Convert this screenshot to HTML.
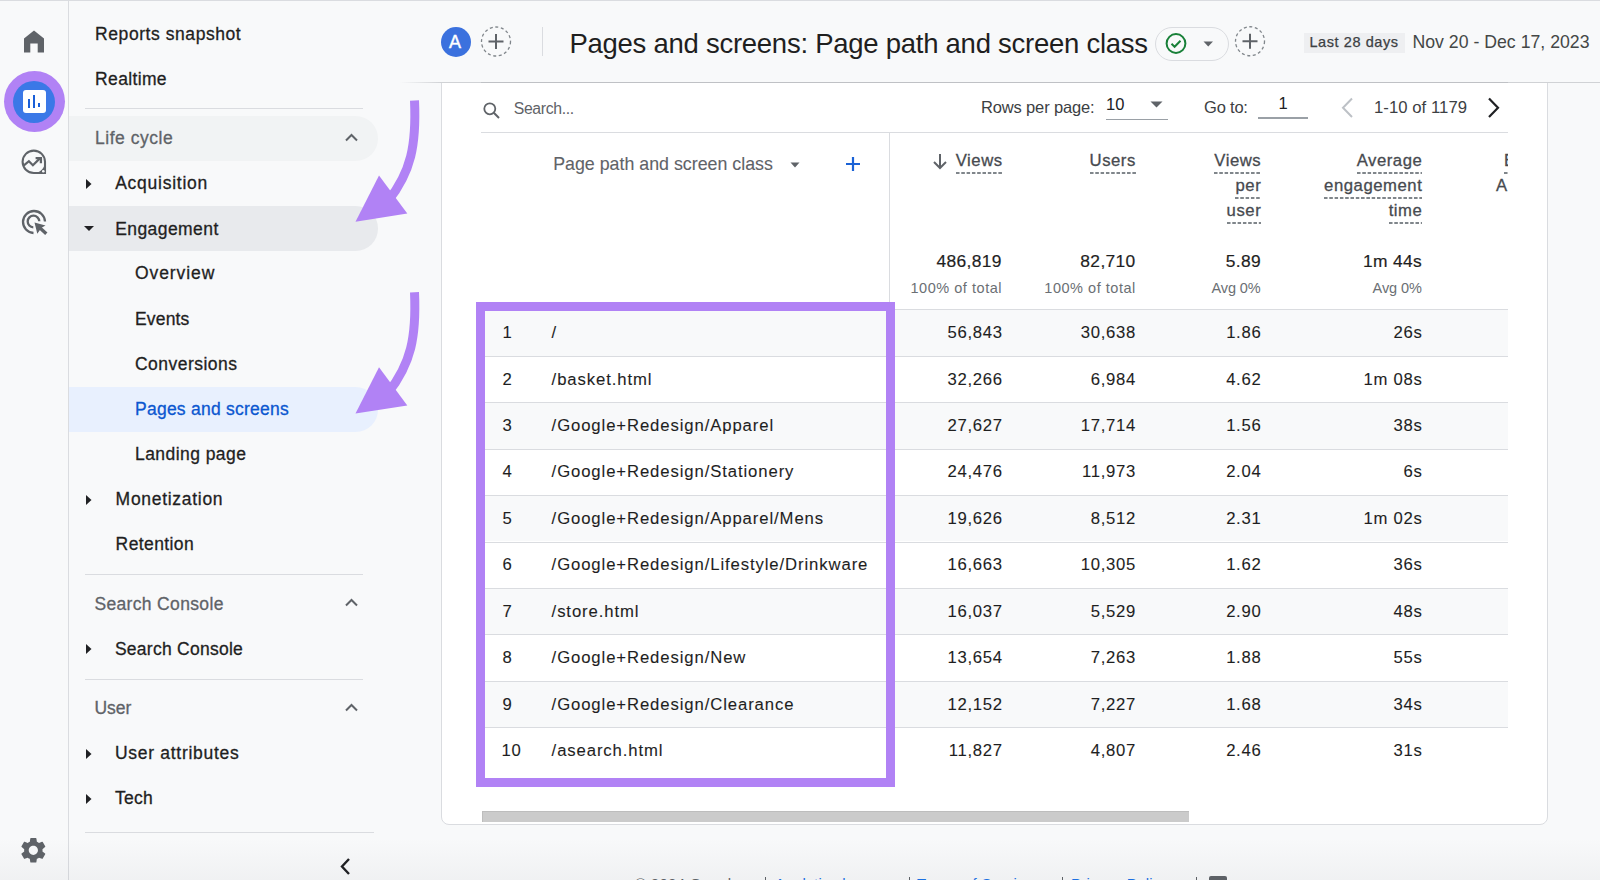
<!DOCTYPE html>
<html><head><meta charset="utf-8"><title>GA4 Pages and screens</title>
<style>
html,body{margin:0;padding:0}
body{width:1600px;height:880px;overflow:hidden;position:relative;background:#f8f9fa;font-family:"Liberation Sans",sans-serif}
.t{position:absolute;white-space:nowrap;line-height:normal}
.r{position:absolute}
.dash{background-image:linear-gradient(90deg,#80868b 66%,transparent 66%);background-size:5.3px 2px;background-repeat:repeat-x;background-position:0 100%;padding-bottom:4px;-webkit-text-stroke:inherit}
</style></head><body>
<div class="r" style="left:0px;top:0px;width:1600px;height:1px;background:#dadce0;"></div>
<div class="r" style="left:68px;top:0px;width:1px;height:880px;background:#dadce0;"></div>
<svg class="r" style="left:22px;top:29px" width="24" height="24" viewBox="0 0 24 24"><path d="M12 1.5 L22 9.5 V23.5 H15.7 V14.5 H8.3 V23.5 H2 V9.5 Z" fill="#5f6368"/></svg>
<div class="r" style="left:3.5px;top:71px;width:61px;height:61px;border-radius:50%;background:#b182f5"></div>
<div class="r" style="left:13px;top:80.5px;width:42px;height:42px;border-radius:50%;background:#3b78e7"></div>
<div class="r" style="left:22.5px;top:90px;width:23px;height:23px;border-radius:3px;background:#fff"></div>
<div class="r" style="left:27.8px;top:99px;width:2.2px;height:8.5px;background:#1a5fd8;"></div>
<div class="r" style="left:33.1px;top:95px;width:2px;height:12.5px;background:#1a5fd8;"></div>
<div class="r" style="left:38.1px;top:102.8px;width:2.2px;height:4.7px;background:#1a5fd8;"></div>
<svg class="r" style="left:18px;top:146px" width="32" height="32" viewBox="0 0 32 32"><path d="M15.8 4.6 A11.2 11.2 0 1 0 15.8 27 H27 V15.8 A11.2 11.2 0 0 0 15.8 4.6 Z" fill="none" stroke="#5f6368" stroke-width="2.1"/><path d="M27 15.8 V27 H15.8 A11.2 11.2 0 0 0 27 15.8 Z" fill="#5f6368"/><circle cx="25.3" cy="25.2" r="1.3" fill="#f8f9fa"/><path d="M5.6 19.6 L10.9 15.2 L14.9 19.2 L21.6 12.6" fill="none" stroke="#5f6368" stroke-width="2.2"/><path d="M17.6 12.1 H22.9 V17.2" fill="none" stroke="#5f6368" stroke-width="2.3"/></svg>
<svg class="r" style="left:21px;top:209px" width="27" height="27" viewBox="0 0 27 27"><path d="M24 12.5 A11 11 0 1 0 12.5 24" fill="none" stroke="#5f6368" stroke-width="2.3"/><path d="M18.3 12.3 A5.8 5.8 0 1 0 12.3 18.3" fill="none" stroke="#5f6368" stroke-width="2.3"/><path d="M13.5 13.5 L24.5 16.6 L20.5 18.8 L16.3 24.8 Z" fill="#5f6368"/><path d="M19 19 L25.3 24.8" stroke="#5f6368" stroke-width="3.3"/></svg>
<svg class="r" style="left:18.4px;top:835.4px" width="30.7" height="30.7" viewBox="0 0 24 24"><path fill="#5f6368" d="M19.14 12.94c.04-.3.06-.61.06-.94 0-.32-.02-.64-.07-.94l2.03-1.58a.49.49 0 0 0 .12-.61l-1.92-3.32a.488.488 0 0 0-.59-.22l-2.39.96c-.5-.38-1.03-.7-1.62-.94l-.36-2.54a.484.484 0 0 0-.48-.41h-3.84c-.24 0-.43.17-.47.41l-.36 2.54c-.59.24-1.13.57-1.62.94l-2.39-.96c-.22-.08-.47 0-.59.22L2.74 8.87c-.12.21-.08.47.12.61l2.03 1.58c-.05.3-.09.63-.09.94s.02.64.07.94l-2.03 1.58a.49.49 0 0 0-.12.61l1.92 3.32c.12.22.37.29.59.22l2.39-.96c.5.38 1.03.7 1.62.94l.36 2.54c.05.24.24.41.48.41h3.84c.24 0 .44-.17.47-.41l.36-2.54c.59-.24 1.13-.56 1.62-.94l2.39.96c.22.08.47 0 .59-.22l1.92-3.32c.12-.22.07-.47-.12-.61l-2.01-1.58zM12 15.6c-1.98 0-3.6-1.62-3.6-3.6s1.62-3.6 3.6-3.6 3.6 1.62 3.6 3.6-1.62 3.6-3.6 3.6z"/></svg>
<div class="t" style="left:95.10px;top:23.96px;font-size:17.5px;color:#1f1f1f;letter-spacing:0.562px;font-weight:400;-webkit-text-stroke:0.3px currentColor;">Reports snapshot</div>
<div class="t" style="left:95.10px;top:68.86px;font-size:17.5px;color:#1f1f1f;letter-spacing:0.349px;font-weight:400;-webkit-text-stroke:0.3px currentColor;">Realtime</div>
<div class="r" style="left:85px;top:108px;width:278px;height:1px;background:#dadce0;"></div>
<div class="r" style="left:69px;top:116px;width:309px;height:44.6px;background:#f1f3f4;border-radius:0 22.3px 22.3px 0"></div>
<div class="t" style="left:95.00px;top:128.26px;font-size:17.5px;color:#5f6368;letter-spacing:0.518px;font-weight:400;-webkit-text-stroke:0.3px currentColor;">Life cycle</div>
<svg class="r" style="left:344px;top:132px" width="15" height="11" viewBox="0 0 15 11"><path d="M2 8.5 L7.5 3 L13 8.5" fill="none" stroke="#5f6368" stroke-width="2"/></svg>
<svg class="r" style="left:85.5px;top:179px" width="6" height="10" viewBox="0 0 6 10"><path d="M0 0 L5.5 5 L0 10 Z" fill="#202124"/></svg>
<div class="t" style="left:115.20px;top:173.46px;font-size:17.5px;color:#1f1f1f;letter-spacing:0.747px;font-weight:400;-webkit-text-stroke:0.3px currentColor;">Acquisition</div>
<div class="r" style="left:69px;top:206.2px;width:309px;height:44.7px;background:#e8eaed;border-radius:0 22.3px 22.3px 0"></div>
<svg class="r" style="left:83.5px;top:226px" width="10" height="6" viewBox="0 0 10 6"><path d="M0 0 L10 0 L5 5 Z" fill="#202124"/></svg>
<div class="t" style="left:115.20px;top:218.56px;font-size:17.5px;color:#1f1f1f;letter-spacing:0.429px;font-weight:400;-webkit-text-stroke:0.3px currentColor;">Engagement</div>
<div class="t" style="left:135.00px;top:263.36px;font-size:17.5px;color:#1f1f1f;letter-spacing:0.918px;font-weight:400;-webkit-text-stroke:0.3px currentColor;">Overview</div>
<div class="t" style="left:135.00px;top:308.66px;font-size:17.5px;color:#1f1f1f;letter-spacing:0.16px;font-weight:400;-webkit-text-stroke:0.3px currentColor;">Events</div>
<div class="t" style="left:135.00px;top:353.66px;font-size:17.5px;color:#1f1f1f;letter-spacing:0.473px;font-weight:400;-webkit-text-stroke:0.3px currentColor;">Conversions</div>
<div class="r" style="left:69px;top:387px;width:309px;height:44.75px;background:#e8f0fe;border-radius:0 22.3px 22.3px 0"></div>
<div class="t" style="left:135.00px;top:398.96px;font-size:17.5px;color:#0b57d0;letter-spacing:0.246px;font-weight:400;-webkit-text-stroke:0.3px currentColor;">Pages and screens</div>
<div class="t" style="left:135.00px;top:444.06px;font-size:17.5px;color:#1f1f1f;letter-spacing:0.438px;font-weight:400;-webkit-text-stroke:0.3px currentColor;">Landing page</div>
<svg class="r" style="left:86px;top:494.5px" width="6" height="10" viewBox="0 0 6 10"><path d="M0 0 L5.5 5 L0 10 Z" fill="#202124"/></svg>
<div class="t" style="left:115.60px;top:489.06px;font-size:17.5px;color:#1f1f1f;letter-spacing:0.707px;font-weight:400;-webkit-text-stroke:0.3px currentColor;">Monetization</div>
<div class="t" style="left:115.60px;top:534.06px;font-size:17.5px;color:#1f1f1f;letter-spacing:0.398px;font-weight:400;-webkit-text-stroke:0.3px currentColor;">Retention</div>
<div class="r" style="left:85px;top:573.5px;width:278px;height:1px;background:#dadce0;"></div>
<div class="t" style="left:94.40px;top:593.96px;font-size:17.5px;color:#5f6368;letter-spacing:0.345px;font-weight:400;-webkit-text-stroke:0.3px currentColor;">Search Console</div>
<svg class="r" style="left:344px;top:597px" width="15" height="11" viewBox="0 0 15 11"><path d="M2 8.5 L7.5 3 L13 8.5" fill="none" stroke="#5f6368" stroke-width="2"/></svg>
<svg class="r" style="left:86px;top:644px" width="6" height="10" viewBox="0 0 6 10"><path d="M0 0 L5.5 5 L0 10 Z" fill="#202124"/></svg>
<div class="t" style="left:114.90px;top:638.56px;font-size:17.5px;color:#1f1f1f;letter-spacing:0.261px;font-weight:400;-webkit-text-stroke:0.3px currentColor;">Search Console</div>
<div class="r" style="left:85px;top:678.5px;width:278px;height:1px;background:#dadce0;"></div>
<div class="t" style="left:94.40px;top:697.86px;font-size:17.5px;color:#5f6368;letter-spacing:-0.014px;font-weight:400;-webkit-text-stroke:0.3px currentColor;">User</div>
<svg class="r" style="left:344px;top:702px" width="15" height="11" viewBox="0 0 15 11"><path d="M2 8.5 L7.5 3 L13 8.5" fill="none" stroke="#5f6368" stroke-width="2"/></svg>
<svg class="r" style="left:86px;top:748.5px" width="6" height="10" viewBox="0 0 6 10"><path d="M0 0 L5.5 5 L0 10 Z" fill="#202124"/></svg>
<div class="t" style="left:115.00px;top:743.26px;font-size:17.5px;color:#1f1f1f;letter-spacing:0.708px;font-weight:400;-webkit-text-stroke:0.3px currentColor;">User attributes</div>
<svg class="r" style="left:86px;top:793.5px" width="6" height="10" viewBox="0 0 6 10"><path d="M0 0 L5.5 5 L0 10 Z" fill="#202124"/></svg>
<div class="t" style="left:115.00px;top:788.26px;font-size:17.5px;color:#1f1f1f;letter-spacing:0.247px;font-weight:400;-webkit-text-stroke:0.3px currentColor;">Tech</div>
<div class="r" style="left:85px;top:832px;width:289px;height:1px;background:#dadce0;"></div>
<svg class="r" style="left:337px;top:856px" width="16" height="21" viewBox="0 0 16 21"><path d="M12 3 L5 10.5 L12 18" fill="none" stroke="#202124" stroke-width="2.4"/></svg>
<div class="r" style="left:441px;top:60px;width:1105px;height:762.5px;background:#fff;border:1px solid #dadce0;border-radius:8px"></div>
<div class="r" style="left:400px;top:1px;width:1200px;height:81px;background:#f8f9fa;"></div>
<div class="r" style="left:400px;top:82px;width:1200px;height:1px;background:linear-gradient(90deg,rgba(200,202,206,0),#d0d2d5 41px,#d0d2d5)"></div>
<div class="r" style="left:481px;top:82px;width:1027px;height:1px;background:#bfc1c5;"></div>
<div class="r" style="left:441px;top:26.5px;width:30px;height:30px;border-radius:50%;background:#3b71de"></div>
<div class="t" style="left:449.00px;top:32.21px;font-size:18px;color:#fff;letter-spacing:0px;font-weight:400;-webkit-text-stroke:0.4px #fff;">A</div>
<svg class="r" style="left:480px;top:26px" width="32" height="32" viewBox="0 0 32 32"><circle cx="16" cy="15.5" r="14.5" fill="none" stroke="#80868b" stroke-width="1.3" stroke-dasharray="3 2.6"/><path d="M8.5 15.5 H23.5 M16 8 V23" stroke="#5f6368" stroke-width="2"/></svg>
<div class="r" style="left:541.5px;top:26.5px;width:1px;height:29px;background:#dadce0;"></div>
<div class="t" style="left:569.40px;top:28.01px;font-size:27.5px;color:#1f1f1f;letter-spacing:-0.261px;font-weight:400;">Pages and screens: Page path and screen class</div>
<div class="r" style="left:1155px;top:26.5px;width:74px;height:34px;box-sizing:border-box;border:1px solid #dadce0;border-radius:17px"></div>
<svg class="r" style="left:1165px;top:33px" width="22" height="22" viewBox="0 0 22 22"><circle cx="11" cy="10.5" r="9.4" fill="none" stroke="#188038" stroke-width="2"/><path d="M6.5 10.8 L9.6 13.8 L15.5 7.8" fill="none" stroke="#188038" stroke-width="2"/></svg>
<svg class="r" style="left:1203px;top:41px" width="11" height="6" viewBox="0 0 11 6"><path d="M0.5 0.5 H10 L5.25 5.5 Z" fill="#5f6368"/></svg>
<svg class="r" style="left:1234px;top:25px" width="32" height="32" viewBox="0 0 32 32"><circle cx="16" cy="16.25" r="14.5" fill="none" stroke="#80868b" stroke-width="1.3" stroke-dasharray="3 2.6"/><path d="M8.5 16.25 H23.5 M16 8.75 V23.75" stroke="#5f6368" stroke-width="2"/></svg>
<div class="r" style="left:1304px;top:32.6px;width:100.7px;height:20px;background:#eeeff1"></div>
<div class="t" style="left:1309.40px;top:33.98px;font-size:14.5px;color:#3c4043;letter-spacing:0.59px;font-weight:400;-webkit-text-stroke:0.25px currentColor;">Last 28 days</div>
<div class="t" style="left:1412.50px;top:32.08px;font-size:17.7px;color:#444746;letter-spacing:0px;font-weight:400;">Nov 20 - Dec 17, 2023</div>
<svg class="r" style="left:482px;top:101px" width="19" height="19" viewBox="0 0 19 19"><circle cx="7.8" cy="7.8" r="5.5" fill="none" stroke="#5f6368" stroke-width="1.8"/><path d="M11.8 11.8 L17 17" stroke="#5f6368" stroke-width="2"/></svg>
<div class="t" style="left:513.70px;top:99.60px;font-size:15.8px;color:#5f6368;letter-spacing:-0.341px;font-weight:400;">Search...</div>
<div class="t" style="left:981.00px;top:98.07px;font-size:16.5px;color:#3c4043;letter-spacing:-0.15px;font-weight:400;">Rows per page:</div>
<div class="t" style="left:1106.00px;top:95.27px;font-size:16.5px;color:#202124;letter-spacing:0px;font-weight:400;">10</div>
<svg class="r" style="left:1150px;top:101px" width="13" height="7" viewBox="0 0 13 7"><path d="M0.5 0.5 H12.5 L6.5 6.5 Z" fill="#5f6368"/></svg>
<div class="r" style="left:1105.5px;top:118.5px;width:62.5px;height:1.5px;background:#9aa0a6;"></div>
<div class="t" style="left:1204.00px;top:98.07px;font-size:16.5px;color:#3c4043;letter-spacing:-0.2px;font-weight:400;">Go to:</div>
<div class="t" style="left:1278.50px;top:93.67px;font-size:16.5px;color:#202124;letter-spacing:0px;font-weight:400;">1</div>
<div class="r" style="left:1258px;top:117px;width:50px;height:1.5px;background:#9aa0a6;"></div>
<svg class="r" style="left:1340px;top:97px" width="15" height="22" viewBox="0 0 15 22"><path d="M12 1.5 L3 10.8 L12 20" fill="none" stroke="#bdc1c6" stroke-width="2"/></svg>
<div class="t" style="left:1374.00px;top:97.64px;font-size:16.7px;color:#3c4043;letter-spacing:0.05px;font-weight:400;">1-10 of 1179</div>
<svg class="r" style="left:1486px;top:97px" width="15" height="22" viewBox="0 0 15 22"><path d="M3 1.5 L12 10.8 L3 20" fill="none" stroke="#202124" stroke-width="2.2"/></svg>
<div class="r" style="left:481px;top:132px;width:1027px;height:1px;background:#dadce0;"></div>
<div class="t" style="left:553.20px;top:153.59px;font-size:17.8px;color:#5f6368;letter-spacing:0.009px;font-weight:400;-webkit-text-stroke:0.1px currentColor;">Page path and screen class</div>
<svg class="r" style="left:790px;top:161.5px" width="10" height="6" viewBox="0 0 10 6"><path d="M0.5 0.5 H9.5 L5 5.5 Z" fill="#5f6368"/></svg>
<svg class="r" style="left:845px;top:155.5px" width="16" height="16" viewBox="0 0 16 16"><path d="M1 8 H15 M8 1 V15" stroke="#1a62d6" stroke-width="2.2"/></svg>
<div class="r" style="left:889px;top:133px;width:1px;height:176.5px;background:#dadce0;"></div>
<svg class="r" style="left:932px;top:153px" width="16" height="17" viewBox="0 0 16 17"><path d="M8 1 V15 M2 9 L8 15 L14 9" fill="none" stroke="#5f6368" stroke-width="2"/></svg>
<div class="t" style="right:597.34px;text-align:right;top:150.89px;font-size:16.7px;color:#474a4f;letter-spacing:0.55px;font-weight:400;-webkit-text-stroke:0.3px currentColor;"><span class="dash">Views</span></div>
<div class="t" style="right:464.14px;text-align:right;top:150.89px;font-size:16.7px;color:#474a4f;letter-spacing:0.55px;font-weight:400;-webkit-text-stroke:0.3px currentColor;"><span class="dash">Users</span></div>
<div class="t" style="right:338.74px;text-align:right;top:150.89px;font-size:16.7px;color:#474a4f;letter-spacing:0.55px;font-weight:400;-webkit-text-stroke:0.3px currentColor;"><span class="dash">Views</span></div>
<div class="t" style="right:338.74px;text-align:right;top:175.89px;font-size:16.7px;color:#474a4f;letter-spacing:0.55px;font-weight:400;-webkit-text-stroke:0.3px currentColor;"><span class="dash">per</span></div>
<div class="t" style="right:338.74px;text-align:right;top:200.89px;font-size:16.7px;color:#474a4f;letter-spacing:0.55px;font-weight:400;-webkit-text-stroke:0.3px currentColor;"><span class="dash">user</span></div>
<div class="t" style="right:177.66px;text-align:right;top:150.89px;font-size:16.7px;color:#474a4f;letter-spacing:0.55px;font-weight:400;-webkit-text-stroke:0.3px currentColor;"><span class="dash">Average</span></div>
<div class="t" style="right:177.65px;text-align:right;top:175.89px;font-size:16.7px;color:#474a4f;letter-spacing:0.55px;font-weight:400;-webkit-text-stroke:0.3px currentColor;"><span class="dash">engagement</span></div>
<div class="t" style="right:177.65px;text-align:right;top:200.89px;font-size:16.7px;color:#474a4f;letter-spacing:0.55px;font-weight:400;-webkit-text-stroke:0.3px currentColor;"><span class="dash">time</span></div>
<div class="r" style="left:1490px;top:140px;width:18px;height:60px;overflow:hidden">
<div class="t" style="left:14px;top:10.89px;font-size:16.7px;color:#474a4f;-webkit-text-stroke:0.3px currentColor;"><span class="dash">E</span></div>
<div class="t" style="left:6px;top:35.89px;font-size:16.7px;color:#474a4f;-webkit-text-stroke:0.3px currentColor;">A</div>
</div>
<div class="t" style="right:598.15px;text-align:right;top:251.25px;font-size:17.4px;color:#1f1f1f;letter-spacing:0.35px;font-weight:400;-webkit-text-stroke:0.2px currentColor;">486,819</div>
<div class="t" style="right:597.96px;text-align:right;top:280.13px;font-size:14.5px;color:#6b6f74;letter-spacing:0.53px;font-weight:400;">100% of total</div>
<div class="t" style="right:464.36px;text-align:right;top:251.25px;font-size:17.4px;color:#1f1f1f;letter-spacing:0.35px;font-weight:400;-webkit-text-stroke:0.2px currentColor;">82,710</div>
<div class="t" style="right:464.16px;text-align:right;top:280.13px;font-size:14.5px;color:#6b6f74;letter-spacing:0.53px;font-weight:400;">100% of total</div>
<div class="t" style="right:338.94px;text-align:right;top:251.25px;font-size:17.4px;color:#1f1f1f;letter-spacing:0.35px;font-weight:400;-webkit-text-stroke:0.2px currentColor;">5.89</div>
<div class="t" style="right:339.40px;text-align:right;top:280.13px;font-size:14.5px;color:#6b6f74;letter-spacing:-0.101px;font-weight:400;">Avg 0%</div>
<div class="t" style="right:177.84px;text-align:right;top:251.25px;font-size:17.4px;color:#1f1f1f;letter-spacing:0.35px;font-weight:400;-webkit-text-stroke:0.2px currentColor;">1m 44s</div>
<div class="t" style="right:178.30px;text-align:right;top:280.13px;font-size:14.5px;color:#6b6f74;letter-spacing:-0.101px;font-weight:400;">Avg 0%</div>
<div class="r" style="left:481px;top:309.3px;width:1027px;height:46.44px;background:#f8f9fa;"></div>
<div class="r" style="left:481px;top:309.3px;width:1027px;height:1px;background:#dadce0;"></div>
<div class="t" style="left:502.40px;top:323.09px;font-size:16.7px;color:#1f1f1f;letter-spacing:0.7px;font-weight:400;-webkit-text-stroke:0.1px currentColor;">1</div>
<div class="t" style="left:551.60px;top:323.09px;font-size:16.7px;color:#1f1f1f;letter-spacing:0.9px;font-weight:400;-webkit-text-stroke:0.1px currentColor;">/</div>
<div class="t" style="right:597.21px;text-align:right;top:323.09px;font-size:16.7px;color:#1f1f1f;letter-spacing:0.7px;font-weight:400;-webkit-text-stroke:0.1px currentColor;">56,843</div>
<div class="t" style="right:464.01px;text-align:right;top:323.09px;font-size:16.7px;color:#1f1f1f;letter-spacing:0.7px;font-weight:400;-webkit-text-stroke:0.1px currentColor;">30,638</div>
<div class="t" style="right:338.60px;text-align:right;top:323.09px;font-size:16.7px;color:#1f1f1f;letter-spacing:0.7px;font-weight:400;-webkit-text-stroke:0.1px currentColor;">1.86</div>
<div class="t" style="right:177.49px;text-align:right;top:323.09px;font-size:16.7px;color:#1f1f1f;letter-spacing:0.7px;font-weight:400;-webkit-text-stroke:0.1px currentColor;">26s</div>
<div class="r" style="left:481px;top:355.74px;width:1027px;height:1px;background:#dadce0;"></div>
<div class="t" style="left:502.40px;top:369.53px;font-size:16.7px;color:#1f1f1f;letter-spacing:0.7px;font-weight:400;-webkit-text-stroke:0.1px currentColor;">2</div>
<div class="t" style="left:551.60px;top:369.53px;font-size:16.7px;color:#1f1f1f;letter-spacing:0.9px;font-weight:400;-webkit-text-stroke:0.1px currentColor;">/basket.html</div>
<div class="t" style="right:597.21px;text-align:right;top:369.53px;font-size:16.7px;color:#1f1f1f;letter-spacing:0.7px;font-weight:400;-webkit-text-stroke:0.1px currentColor;">32,266</div>
<div class="t" style="right:463.99px;text-align:right;top:369.53px;font-size:16.7px;color:#1f1f1f;letter-spacing:0.7px;font-weight:400;-webkit-text-stroke:0.1px currentColor;">6,984</div>
<div class="t" style="right:338.60px;text-align:right;top:369.53px;font-size:16.7px;color:#1f1f1f;letter-spacing:0.7px;font-weight:400;-webkit-text-stroke:0.1px currentColor;">4.62</div>
<div class="t" style="right:177.49px;text-align:right;top:369.53px;font-size:16.7px;color:#1f1f1f;letter-spacing:0.7px;font-weight:400;-webkit-text-stroke:0.1px currentColor;">1m 08s</div>
<div class="r" style="left:481px;top:402.18px;width:1027px;height:46.44px;background:#f8f9fa;"></div>
<div class="r" style="left:481px;top:402.18px;width:1027px;height:1px;background:#dadce0;"></div>
<div class="t" style="left:502.40px;top:415.97px;font-size:16.7px;color:#1f1f1f;letter-spacing:0.7px;font-weight:400;-webkit-text-stroke:0.1px currentColor;">3</div>
<div class="t" style="left:551.60px;top:415.97px;font-size:16.7px;color:#1f1f1f;letter-spacing:0.9px;font-weight:400;-webkit-text-stroke:0.1px currentColor;">/Google+Redesign/Apparel</div>
<div class="t" style="right:597.21px;text-align:right;top:415.97px;font-size:16.7px;color:#1f1f1f;letter-spacing:0.7px;font-weight:400;-webkit-text-stroke:0.1px currentColor;">27,627</div>
<div class="t" style="right:464.01px;text-align:right;top:415.97px;font-size:16.7px;color:#1f1f1f;letter-spacing:0.7px;font-weight:400;-webkit-text-stroke:0.1px currentColor;">17,714</div>
<div class="t" style="right:338.60px;text-align:right;top:415.97px;font-size:16.7px;color:#1f1f1f;letter-spacing:0.7px;font-weight:400;-webkit-text-stroke:0.1px currentColor;">1.56</div>
<div class="t" style="right:177.49px;text-align:right;top:415.97px;font-size:16.7px;color:#1f1f1f;letter-spacing:0.7px;font-weight:400;-webkit-text-stroke:0.1px currentColor;">38s</div>
<div class="r" style="left:481px;top:448.62px;width:1027px;height:1px;background:#dadce0;"></div>
<div class="t" style="left:502.40px;top:462.41px;font-size:16.7px;color:#1f1f1f;letter-spacing:0.7px;font-weight:400;-webkit-text-stroke:0.1px currentColor;">4</div>
<div class="t" style="left:551.60px;top:462.41px;font-size:16.7px;color:#1f1f1f;letter-spacing:0.9px;font-weight:400;-webkit-text-stroke:0.1px currentColor;">/Google+Redesign/Stationery</div>
<div class="t" style="right:597.21px;text-align:right;top:462.41px;font-size:16.7px;color:#1f1f1f;letter-spacing:0.7px;font-weight:400;-webkit-text-stroke:0.1px currentColor;">24,476</div>
<div class="t" style="right:463.99px;text-align:right;top:462.41px;font-size:16.7px;color:#1f1f1f;letter-spacing:0.7px;font-weight:400;-webkit-text-stroke:0.1px currentColor;">11,973</div>
<div class="t" style="right:338.60px;text-align:right;top:462.41px;font-size:16.7px;color:#1f1f1f;letter-spacing:0.7px;font-weight:400;-webkit-text-stroke:0.1px currentColor;">2.04</div>
<div class="t" style="right:177.50px;text-align:right;top:462.41px;font-size:16.7px;color:#1f1f1f;letter-spacing:0.7px;font-weight:400;-webkit-text-stroke:0.1px currentColor;">6s</div>
<div class="r" style="left:481px;top:495.06px;width:1027px;height:46.44px;background:#f8f9fa;"></div>
<div class="r" style="left:481px;top:495.06px;width:1027px;height:1px;background:#dadce0;"></div>
<div class="t" style="left:502.40px;top:508.85px;font-size:16.7px;color:#1f1f1f;letter-spacing:0.7px;font-weight:400;-webkit-text-stroke:0.1px currentColor;">5</div>
<div class="t" style="left:551.60px;top:508.85px;font-size:16.7px;color:#1f1f1f;letter-spacing:0.9px;font-weight:400;-webkit-text-stroke:0.1px currentColor;">/Google+Redesign/Apparel/Mens</div>
<div class="t" style="right:597.21px;text-align:right;top:508.85px;font-size:16.7px;color:#1f1f1f;letter-spacing:0.7px;font-weight:400;-webkit-text-stroke:0.1px currentColor;">19,626</div>
<div class="t" style="right:463.99px;text-align:right;top:508.85px;font-size:16.7px;color:#1f1f1f;letter-spacing:0.7px;font-weight:400;-webkit-text-stroke:0.1px currentColor;">8,512</div>
<div class="t" style="right:338.60px;text-align:right;top:508.85px;font-size:16.7px;color:#1f1f1f;letter-spacing:0.7px;font-weight:400;-webkit-text-stroke:0.1px currentColor;">2.31</div>
<div class="t" style="right:177.49px;text-align:right;top:508.85px;font-size:16.7px;color:#1f1f1f;letter-spacing:0.7px;font-weight:400;-webkit-text-stroke:0.1px currentColor;">1m 02s</div>
<div class="r" style="left:481px;top:541.5px;width:1027px;height:1px;background:#dadce0;"></div>
<div class="t" style="left:502.40px;top:555.29px;font-size:16.7px;color:#1f1f1f;letter-spacing:0.7px;font-weight:400;-webkit-text-stroke:0.1px currentColor;">6</div>
<div class="t" style="left:551.60px;top:555.29px;font-size:16.7px;color:#1f1f1f;letter-spacing:0.9px;font-weight:400;-webkit-text-stroke:0.1px currentColor;">/Google+Redesign/Lifestyle/Drinkware</div>
<div class="t" style="right:597.21px;text-align:right;top:555.29px;font-size:16.7px;color:#1f1f1f;letter-spacing:0.7px;font-weight:400;-webkit-text-stroke:0.1px currentColor;">16,663</div>
<div class="t" style="right:464.01px;text-align:right;top:555.29px;font-size:16.7px;color:#1f1f1f;letter-spacing:0.7px;font-weight:400;-webkit-text-stroke:0.1px currentColor;">10,305</div>
<div class="t" style="right:338.60px;text-align:right;top:555.29px;font-size:16.7px;color:#1f1f1f;letter-spacing:0.7px;font-weight:400;-webkit-text-stroke:0.1px currentColor;">1.62</div>
<div class="t" style="right:177.49px;text-align:right;top:555.29px;font-size:16.7px;color:#1f1f1f;letter-spacing:0.7px;font-weight:400;-webkit-text-stroke:0.1px currentColor;">36s</div>
<div class="r" style="left:481px;top:587.94px;width:1027px;height:46.44px;background:#f8f9fa;"></div>
<div class="r" style="left:481px;top:587.94px;width:1027px;height:1px;background:#dadce0;"></div>
<div class="t" style="left:502.40px;top:601.73px;font-size:16.7px;color:#1f1f1f;letter-spacing:0.7px;font-weight:400;-webkit-text-stroke:0.1px currentColor;">7</div>
<div class="t" style="left:551.60px;top:601.73px;font-size:16.7px;color:#1f1f1f;letter-spacing:0.9px;font-weight:400;-webkit-text-stroke:0.1px currentColor;">/store.html</div>
<div class="t" style="right:597.21px;text-align:right;top:601.73px;font-size:16.7px;color:#1f1f1f;letter-spacing:0.7px;font-weight:400;-webkit-text-stroke:0.1px currentColor;">16,037</div>
<div class="t" style="right:463.99px;text-align:right;top:601.73px;font-size:16.7px;color:#1f1f1f;letter-spacing:0.7px;font-weight:400;-webkit-text-stroke:0.1px currentColor;">5,529</div>
<div class="t" style="right:338.60px;text-align:right;top:601.73px;font-size:16.7px;color:#1f1f1f;letter-spacing:0.7px;font-weight:400;-webkit-text-stroke:0.1px currentColor;">2.90</div>
<div class="t" style="right:177.49px;text-align:right;top:601.73px;font-size:16.7px;color:#1f1f1f;letter-spacing:0.7px;font-weight:400;-webkit-text-stroke:0.1px currentColor;">48s</div>
<div class="r" style="left:481px;top:634.38px;width:1027px;height:1px;background:#dadce0;"></div>
<div class="t" style="left:502.40px;top:648.17px;font-size:16.7px;color:#1f1f1f;letter-spacing:0.7px;font-weight:400;-webkit-text-stroke:0.1px currentColor;">8</div>
<div class="t" style="left:551.60px;top:648.17px;font-size:16.7px;color:#1f1f1f;letter-spacing:0.9px;font-weight:400;-webkit-text-stroke:0.1px currentColor;">/Google+Redesign/New</div>
<div class="t" style="right:597.21px;text-align:right;top:648.17px;font-size:16.7px;color:#1f1f1f;letter-spacing:0.7px;font-weight:400;-webkit-text-stroke:0.1px currentColor;">13,654</div>
<div class="t" style="right:463.99px;text-align:right;top:648.17px;font-size:16.7px;color:#1f1f1f;letter-spacing:0.7px;font-weight:400;-webkit-text-stroke:0.1px currentColor;">7,263</div>
<div class="t" style="right:338.60px;text-align:right;top:648.17px;font-size:16.7px;color:#1f1f1f;letter-spacing:0.7px;font-weight:400;-webkit-text-stroke:0.1px currentColor;">1.88</div>
<div class="t" style="right:177.49px;text-align:right;top:648.17px;font-size:16.7px;color:#1f1f1f;letter-spacing:0.7px;font-weight:400;-webkit-text-stroke:0.1px currentColor;">55s</div>
<div class="r" style="left:481px;top:680.82px;width:1027px;height:46.44px;background:#f8f9fa;"></div>
<div class="r" style="left:481px;top:680.82px;width:1027px;height:1px;background:#dadce0;"></div>
<div class="t" style="left:502.40px;top:694.61px;font-size:16.7px;color:#1f1f1f;letter-spacing:0.7px;font-weight:400;-webkit-text-stroke:0.1px currentColor;">9</div>
<div class="t" style="left:551.60px;top:694.61px;font-size:16.7px;color:#1f1f1f;letter-spacing:0.9px;font-weight:400;-webkit-text-stroke:0.1px currentColor;">/Google+Redesign/Clearance</div>
<div class="t" style="right:597.21px;text-align:right;top:694.61px;font-size:16.7px;color:#1f1f1f;letter-spacing:0.7px;font-weight:400;-webkit-text-stroke:0.1px currentColor;">12,152</div>
<div class="t" style="right:463.99px;text-align:right;top:694.61px;font-size:16.7px;color:#1f1f1f;letter-spacing:0.7px;font-weight:400;-webkit-text-stroke:0.1px currentColor;">7,227</div>
<div class="t" style="right:338.60px;text-align:right;top:694.61px;font-size:16.7px;color:#1f1f1f;letter-spacing:0.7px;font-weight:400;-webkit-text-stroke:0.1px currentColor;">1.68</div>
<div class="t" style="right:177.49px;text-align:right;top:694.61px;font-size:16.7px;color:#1f1f1f;letter-spacing:0.7px;font-weight:400;-webkit-text-stroke:0.1px currentColor;">34s</div>
<div class="r" style="left:481px;top:727.26px;width:1027px;height:1px;background:#dadce0;"></div>
<div class="t" style="left:501.50px;top:741.05px;font-size:16.7px;color:#1f1f1f;letter-spacing:0.7px;font-weight:400;-webkit-text-stroke:0.1px currentColor;">10</div>
<div class="t" style="left:551.60px;top:741.05px;font-size:16.7px;color:#1f1f1f;letter-spacing:0.9px;font-weight:400;-webkit-text-stroke:0.1px currentColor;">/asearch.html</div>
<div class="t" style="right:597.19px;text-align:right;top:741.05px;font-size:16.7px;color:#1f1f1f;letter-spacing:0.7px;font-weight:400;-webkit-text-stroke:0.1px currentColor;">11,827</div>
<div class="t" style="right:463.99px;text-align:right;top:741.05px;font-size:16.7px;color:#1f1f1f;letter-spacing:0.7px;font-weight:400;-webkit-text-stroke:0.1px currentColor;">4,807</div>
<div class="t" style="right:338.60px;text-align:right;top:741.05px;font-size:16.7px;color:#1f1f1f;letter-spacing:0.7px;font-weight:400;-webkit-text-stroke:0.1px currentColor;">2.46</div>
<div class="t" style="right:177.49px;text-align:right;top:741.05px;font-size:16.7px;color:#1f1f1f;letter-spacing:0.7px;font-weight:400;-webkit-text-stroke:0.1px currentColor;">31s</div>
<div class="r" style="left:482px;top:811px;width:707px;height:11px;background:#cbcbcb;box-sizing:border-box;border:1px solid #bdbdbd;border-right:0;border-bottom:0"></div>
<div class="r" style="left:476.2px;top:302.4px;width:418.7px;height:484.4px;box-sizing:border-box;border:9.3px solid #b182f5"></div>
<svg class="r" style="left:340px;top:90px" width="90" height="350" viewBox="0 0 90 350">
<path d="M74.5 10.5 C76.5 55 71 82 48 111" fill="none" stroke="#b182f5" stroke-width="9"/>
<path d="M39 85.5 L67.3 123.6 L15.5 131.8 Z" fill="#b182f5"/>
<path d="M74.5 202.3 C76.5 246.8 71 273.8 48 302.8" fill="none" stroke="#b182f5" stroke-width="9"/>
<path d="M39 277.3 L67.3 315.4 L15.5 323.6 Z" fill="#b182f5"/>
</svg>
<div class="t" style="left:635.00px;top:875.42px;font-size:15px;color:#5f6368;letter-spacing:0.3px;font-weight:400;">© 2024 Google</div>
<div class="r" style="left:765px;top:877px;width:1.2px;height:3px;background:#5f6368;"></div>
<div class="t" style="left:775.00px;top:875.42px;font-size:15px;color:#1a73e8;letter-spacing:0.3px;font-weight:400;">Analytics home</div>
<div class="r" style="left:909px;top:877px;width:1.2px;height:3px;background:#5f6368;"></div>
<div class="t" style="left:917.00px;top:875.42px;font-size:15px;color:#1a73e8;letter-spacing:0.3px;font-weight:400;">Terms of Service</div>
<div class="r" style="left:1062px;top:877px;width:1.2px;height:3px;background:#5f6368;"></div>
<div class="t" style="left:1071.00px;top:875.42px;font-size:15px;color:#1a73e8;letter-spacing:0.3px;font-weight:400;">Privacy Policy</div>
<div class="r" style="left:1196px;top:877px;width:1.2px;height:3px;background:#5f6368;"></div>
<div class="r" style="left:1209px;top:876px;width:18px;height:14px;background:#5f6368;border-radius:2px;"></div>
<div class="r" style="left:0;top:838px;width:1600px;height:42px;background:linear-gradient(180deg,rgba(0,0,0,0),rgba(40,44,60,0.04));pointer-events:none"></div>
</body></html>
